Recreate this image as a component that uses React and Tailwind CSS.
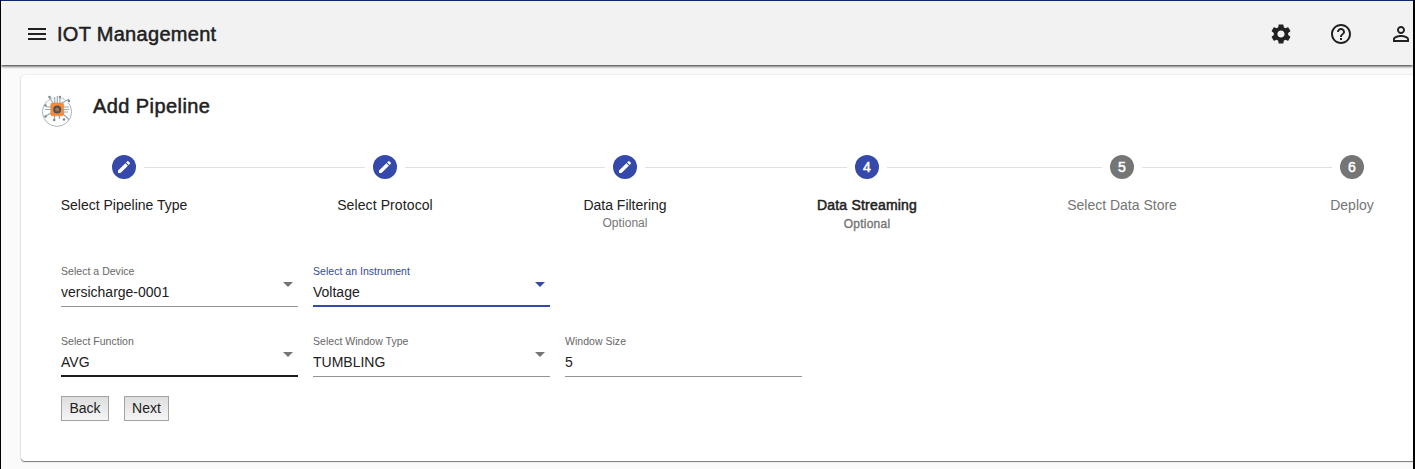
import React from "react";
import { MdMenu, MdSettings, MdHelpOutline, MdPersonOutline, MdCreate } from "react-icons/md";

function PipelineLogo() {
  return (
    <svg className="h-9 w-8 shrink-0" viewBox="0 0 32 36" fill="none">
      <circle cx="16" cy="20.8" r="14.6" stroke="#b0b3b3" strokeWidth="1" />
      <path d="M5 9l5-4M24 8l4 3M11 6h10" stroke="#fff" strokeWidth="2.5" />
      <g stroke="#97aab3" strokeWidth="1.2">
        <path d="M13.7 6v6M16.3 5v7M18.9 6v6M13.5 24v4M18.5 24v4M5 16h5M4 18.5h6M22 16h6M22 18.5h6M22 21h5" />
        <path d="M12 12L8.5 6.5M21 12l7-4M10 22l-6 3.5M22 23l6 5.5" />
      </g>
      <g fill="#7b8b93">
        <circle cx="8.5" cy="6" r="1.3" />
        <circle cx="18.9" cy="6" r="1.2" />
        <circle cx="28" cy="10" r="1.3" />
        <circle cx="4.5" cy="25.5" r="1.3" />
        <circle cx="13.2" cy="29" r="1.3" />
        <circle cx="23" cy="28.5" r="1.3" />
        <circle cx="4.5" cy="14.5" r="1.3" />
      </g>
      <rect x="9.8" y="12" width="12.8" height="12.8" rx="1.6" fill="#f98b35" stroke="#cf8650" strokeWidth=".6" />
      <circle cx="16.2" cy="18.4" r="3" fill="#a9734f" stroke="#4a5357" strokeWidth="2" />
    </svg>
  );
}

const STEPS = [
  { label: "Select Pipeline Type", done: true, line: "w-[221px]", spacing: "" },
  { label: "Select Protocol", done: true, line: "w-[200px]", spacing: "tracking-[0.1px]" },
  { label: "Data Filtering", done: true, optional: true, line: "w-[202px]", spacing: "" },
  { label: "Data Streaming", active: true, optional: true, line: "w-[215px]", spacing: "tracking-[0.2px]" },
  { label: "Select Data Store", line: "w-[190px]", spacing: "" },
  { label: "Deploy", spacing: "" },
];

function Step({ step, number }) {
  const lit = step.done || step.active;
  return (
    <>
      <div className="flex w-6 shrink-0 flex-col items-center whitespace-nowrap">
        <div
          className={`flex size-6 shrink-0 items-center justify-center rounded-full text-sm text-white [-webkit-text-stroke:0.5px] ${
            lit ? "bg-[#3449a9]" : "bg-[#757575]"
          }`}
        >
          {step.done ? <MdCreate className="size-4" /> : number}
        </div>
        <div
          className={`mt-4 text-sm leading-5 ${step.spacing} ${lit ? "text-[#212121]" : "text-[#757575]"} ${
            step.active ? "[-webkit-text-stroke:0.5px]" : ""
          }`}
        >
          {step.label}
        </div>
        {step.optional && (
          <div
            className={`text-xs leading-4 text-[#757575] ${
              step.active ? "pt-px tracking-[0.25px] [-webkit-text-stroke:0.35px]" : "tracking-[0.05px]"
            }`}
          >
            Optional
          </div>
        )}
      </div>
      {step.line && <div className={`mx-2 mt-3 h-px shrink-0 bg-[#e0e0e0] ${step.line}`} />}
    </>
  );
}

function Field({ label, value, tone = "idle", select = true }) {
  const line = {
    idle: "border-b border-[#949494]",
    focus: "border-b-2 border-[#3449a9]",
    dark: "border-b-2 border-[#1c1c1c]",
  }[tone];
  return (
    <div className={`flex h-[42px] w-[237px] flex-col ${line}`}>
      <div className={`text-[10.5px] leading-3 tracking-[0.03px] ${tone === "focus" ? "text-[#3449a9]" : "text-[#666666]"}`}>
        {label}
      </div>
      <div className="flex pt-[5px]">
        <div className="flex-1 text-sm leading-5 text-[#212121]">{value}</div>
        {select && (
          <svg className="mr-[5px] h-[5px] w-2.5" viewBox="0 0 10 5">
            <path d="M0 0h10L5 5z" fill={tone === "focus" ? "#3449a9" : "#757575"} />
          </svg>
        )}
      </div>
    </div>
  );
}

function Button({ children, width }) {
  return (
    <button
      className={`flex h-[25px] items-start justify-center border border-[#a3a3a3] bg-linear-to-b from-[#dedede] to-[#f5f5f5] text-sm leading-[22px] text-[#212121] ${width}`}
    >
      {children}
    </button>
  );
}

export default function App() {
  return (
    <div className="flex h-[469px] w-[1415px] flex-col overflow-hidden border-r-2 border-l border-black bg-[#fafafa] font-['Liberation_Sans',Arial,sans-serif] text-[#212121]">
      <header className="z-10 flex h-[65px] w-full shrink-0 items-center border-t border-[#0c2a66] bg-[#f2f2f2] pt-0.5 shadow-[0_1px_3px_rgba(0,0,0,0.9)]">
        <MdMenu className="ml-6 size-6 shrink-0" />
        <h1 className="ml-2 text-xl leading-6 tracking-[0.3px] whitespace-nowrap [-webkit-text-stroke:0.5px]">
          IOT Management
        </h1>
        <div className="ml-auto flex shrink-0 gap-9">
          <MdSettings className="size-6" />
          <MdHelpOutline className="size-6" />
          <MdPersonOutline className="size-6" />
        </div>
      </header>

      <main className="mt-[10px] ml-5 flex h-[386px] w-[1420px] shrink-0 flex-col rounded bg-white shadow-[0_1px_1px_rgba(0,0,0,0.5),0_0_2px_rgba(0,0,0,0.15)]">
        <div className="flex h-20 pt-4 pl-5">
          <PipelineLogo />
          <h2 className="ml-5 pt-[3px] text-xl leading-6 tracking-[0.42px] [-webkit-text-stroke:0.5px]">Add Pipeline</h2>
        </div>
        <div className="flex h-[110px] shrink-0 pl-[91px]">
          {STEPS.map((step, i) => (
            <Step key={step.label} step={step} number={i + 1} />
          ))}
        </div>
        <div className="flex flex-col gap-7 pl-10">
          <div className="flex gap-[15px]">
            <Field label="Select a Device" value="versicharge-0001" />
            <Field label="Select an Instrument" value="Voltage" tone="focus" />
          </div>
          <div className="flex gap-[15px]">
            <Field label="Select Function" value="AVG" tone="dark" />
            <Field label="Select Window Type" value="TUMBLING" />
            <Field label="Window Size" value="5" select={false} />
          </div>
        </div>
        <div className="mt-[19px] flex gap-[15px] pl-10">
          <Button width="w-12">Back</Button>
          <Button width="w-[45px]">Next</Button>
        </div>
      </main>
    </div>
  );
}
